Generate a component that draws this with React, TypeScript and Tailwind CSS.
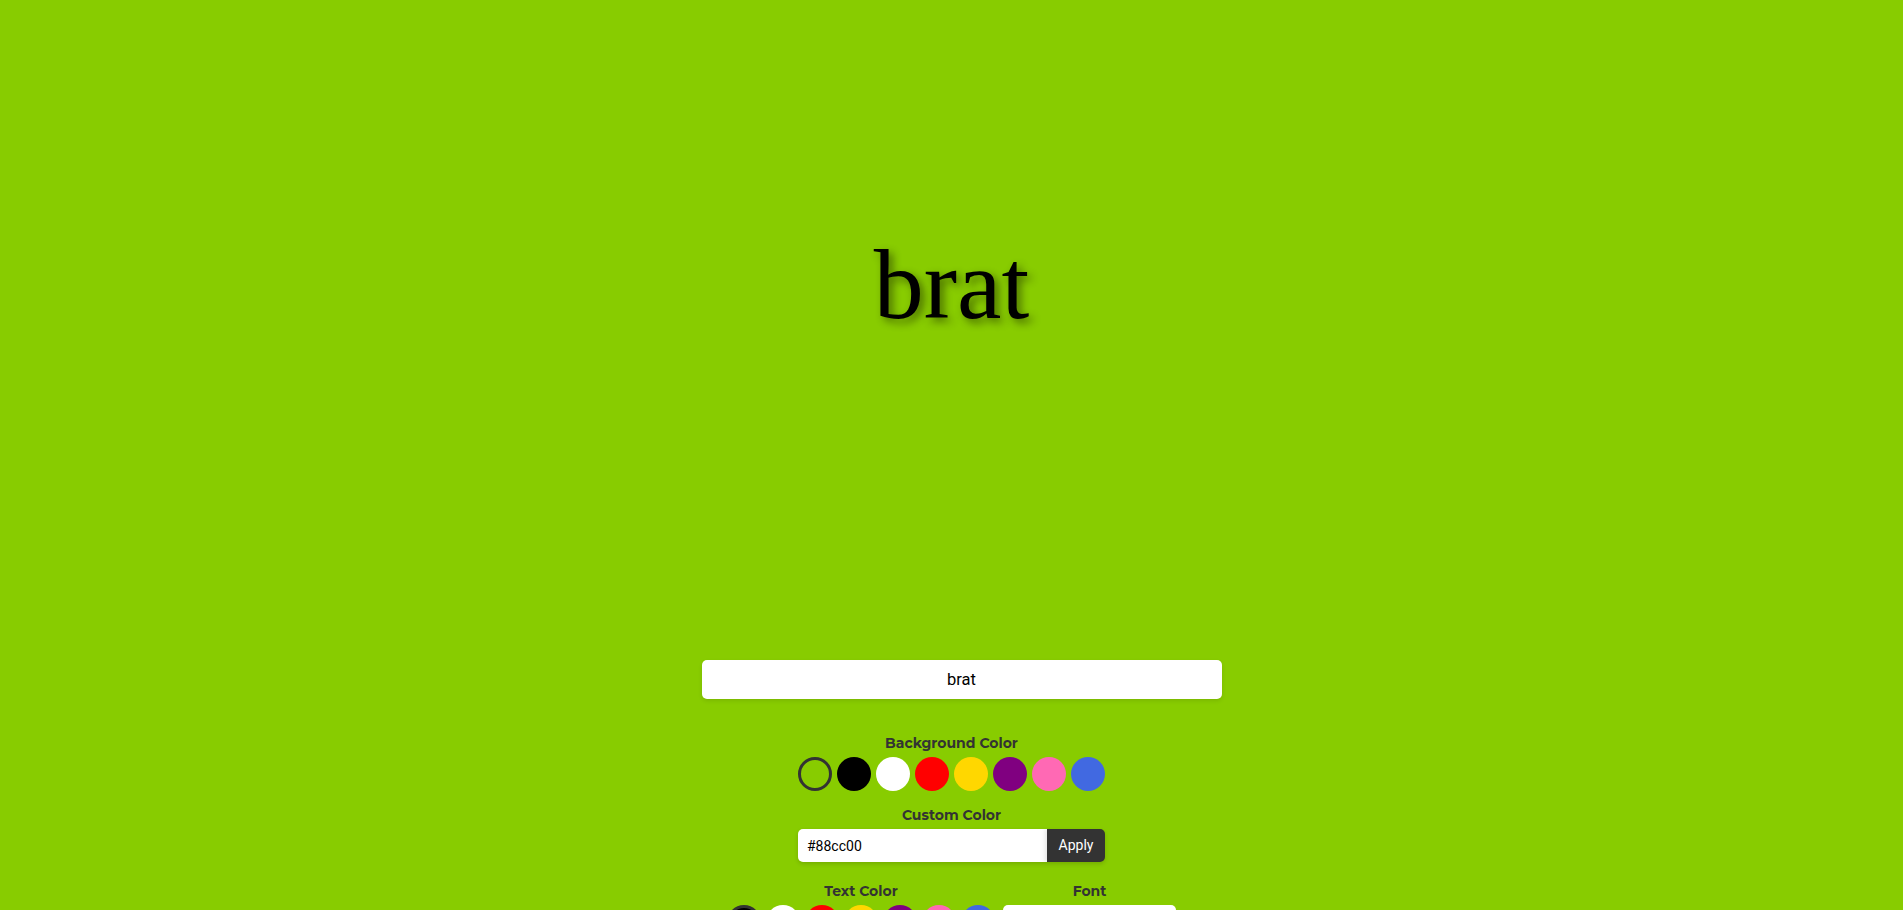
import { useState } from "react";

const bgSwatches = ["#88cc00", "#000000", "#ffffff", "#ff0000", "#ffd700", "#800080", "#ff69b4", "#4169e1"];
const textSwatches = ["#000000", "#ffffff", "#ff0000", "#ffd700", "#800080", "#ff69b4", "#4169e1"];

function Swatch({ color, active, onPick }: { color: string; active: boolean; onPick: () => void }) {
  return (
    <button
      type="button"
      onClick={onPick}
      style={{ backgroundColor: color }}
      className={`box-border h-[34px] w-[34px] shrink-0 rounded-full border-[3px] ${
        active ? "border-[#333333]" : "border-transparent"
      }`}
    />
  );
}

function Label({ children }: { children: string }) {
  return (
    <div className="pt-[1px] text-center font-['Montserrat','Inter',sans-serif] text-[14px] font-bold leading-[18px] text-[#333333]">
      {children}
    </div>
  );
}

export default function App() {
  const [text, setText] = useState("brat");
  const [bg, setBg] = useState("#88cc00");
  const [fg, setFg] = useState("#000000");
  const [custom, setCustom] = useState("#88cc00");

  return (
    <div className="min-h-screen w-full font-['Roboto',sans-serif]" style={{ backgroundColor: bg }}>
      <div className="flex h-[569px] items-center justify-center">
        <h1
          style={{ color: fg }}
          className="font-['Liberation_Serif','Times_New_Roman',serif] text-[100px] leading-[111px] font-normal [text-shadow:4px_4px_8px_rgba(0,0,0,0.45)]"
        >
          {text}
        </h1>
      </div>

      <div className="flex flex-col items-center pt-[91px]">
        <input
          value={text}
          onChange={(e) => setText(e.target.value)}
          className="ml-[20px] box-border h-[39px] w-[520px] rounded-[5px] bg-white px-[10px] text-center text-[16.5px] text-black shadow-[0_2px_4px_rgba(0,0,0,0.1)] outline-none"
        />

        <div className="mt-[34px] flex flex-col items-center gap-[5px]">
          <Label>Background Color</Label>
          <div className="flex gap-[5px]">
            {bgSwatches.map((c) => (
              <Swatch key={c} color={c} active={c === bg} onPick={() => setBg(c)} />
            ))}
          </div>
        </div>

        <div className="mt-[14px] flex flex-col items-center gap-[5px]">
          <Label>Custom Color</Label>
          <div className="flex h-[33px] w-[307px] overflow-hidden rounded-[5px] shadow-[0_2px_4px_rgba(0,0,0,0.15)]">
            <input
              value={custom}
              onChange={(e) => setCustom(e.target.value)}
              className="h-full min-w-0 flex-1 bg-white px-[9px] text-[14px] text-black outline-none"
            />
            <button
              type="button"
              onClick={() => setBg(custom)}
              className="h-full w-[58px] bg-[#333333] text-[14px] text-white shadow-[-2px_0_4px_rgba(0,0,0,0.1)]"
            >
              Apply
            </button>
          </div>
        </div>

        <div className="mt-[19px] flex items-start gap-2">
          <div className="flex flex-col items-center gap-[5px]">
            <Label>Text Color</Label>
            <div className="flex gap-[5px]">
              {textSwatches.map((c) => (
                <Swatch key={c} color={c} active={c === fg} onPick={() => setFg(c)} />
              ))}
            </div>
          </div>
          <div className="flex flex-col items-center gap-[5px]">
            <Label>Font</Label>
            <select className="h-[33px] w-[173px] rounded-[5px] bg-white px-2 text-[14px] text-black outline-none">
              <option>Times New Roman</option>
              <option>Arial</option>
              <option>Helvetica</option>
            </select>
          </div>
        </div>
        <div className="h-[40px]" />
      </div>
    </div>
  );
}
